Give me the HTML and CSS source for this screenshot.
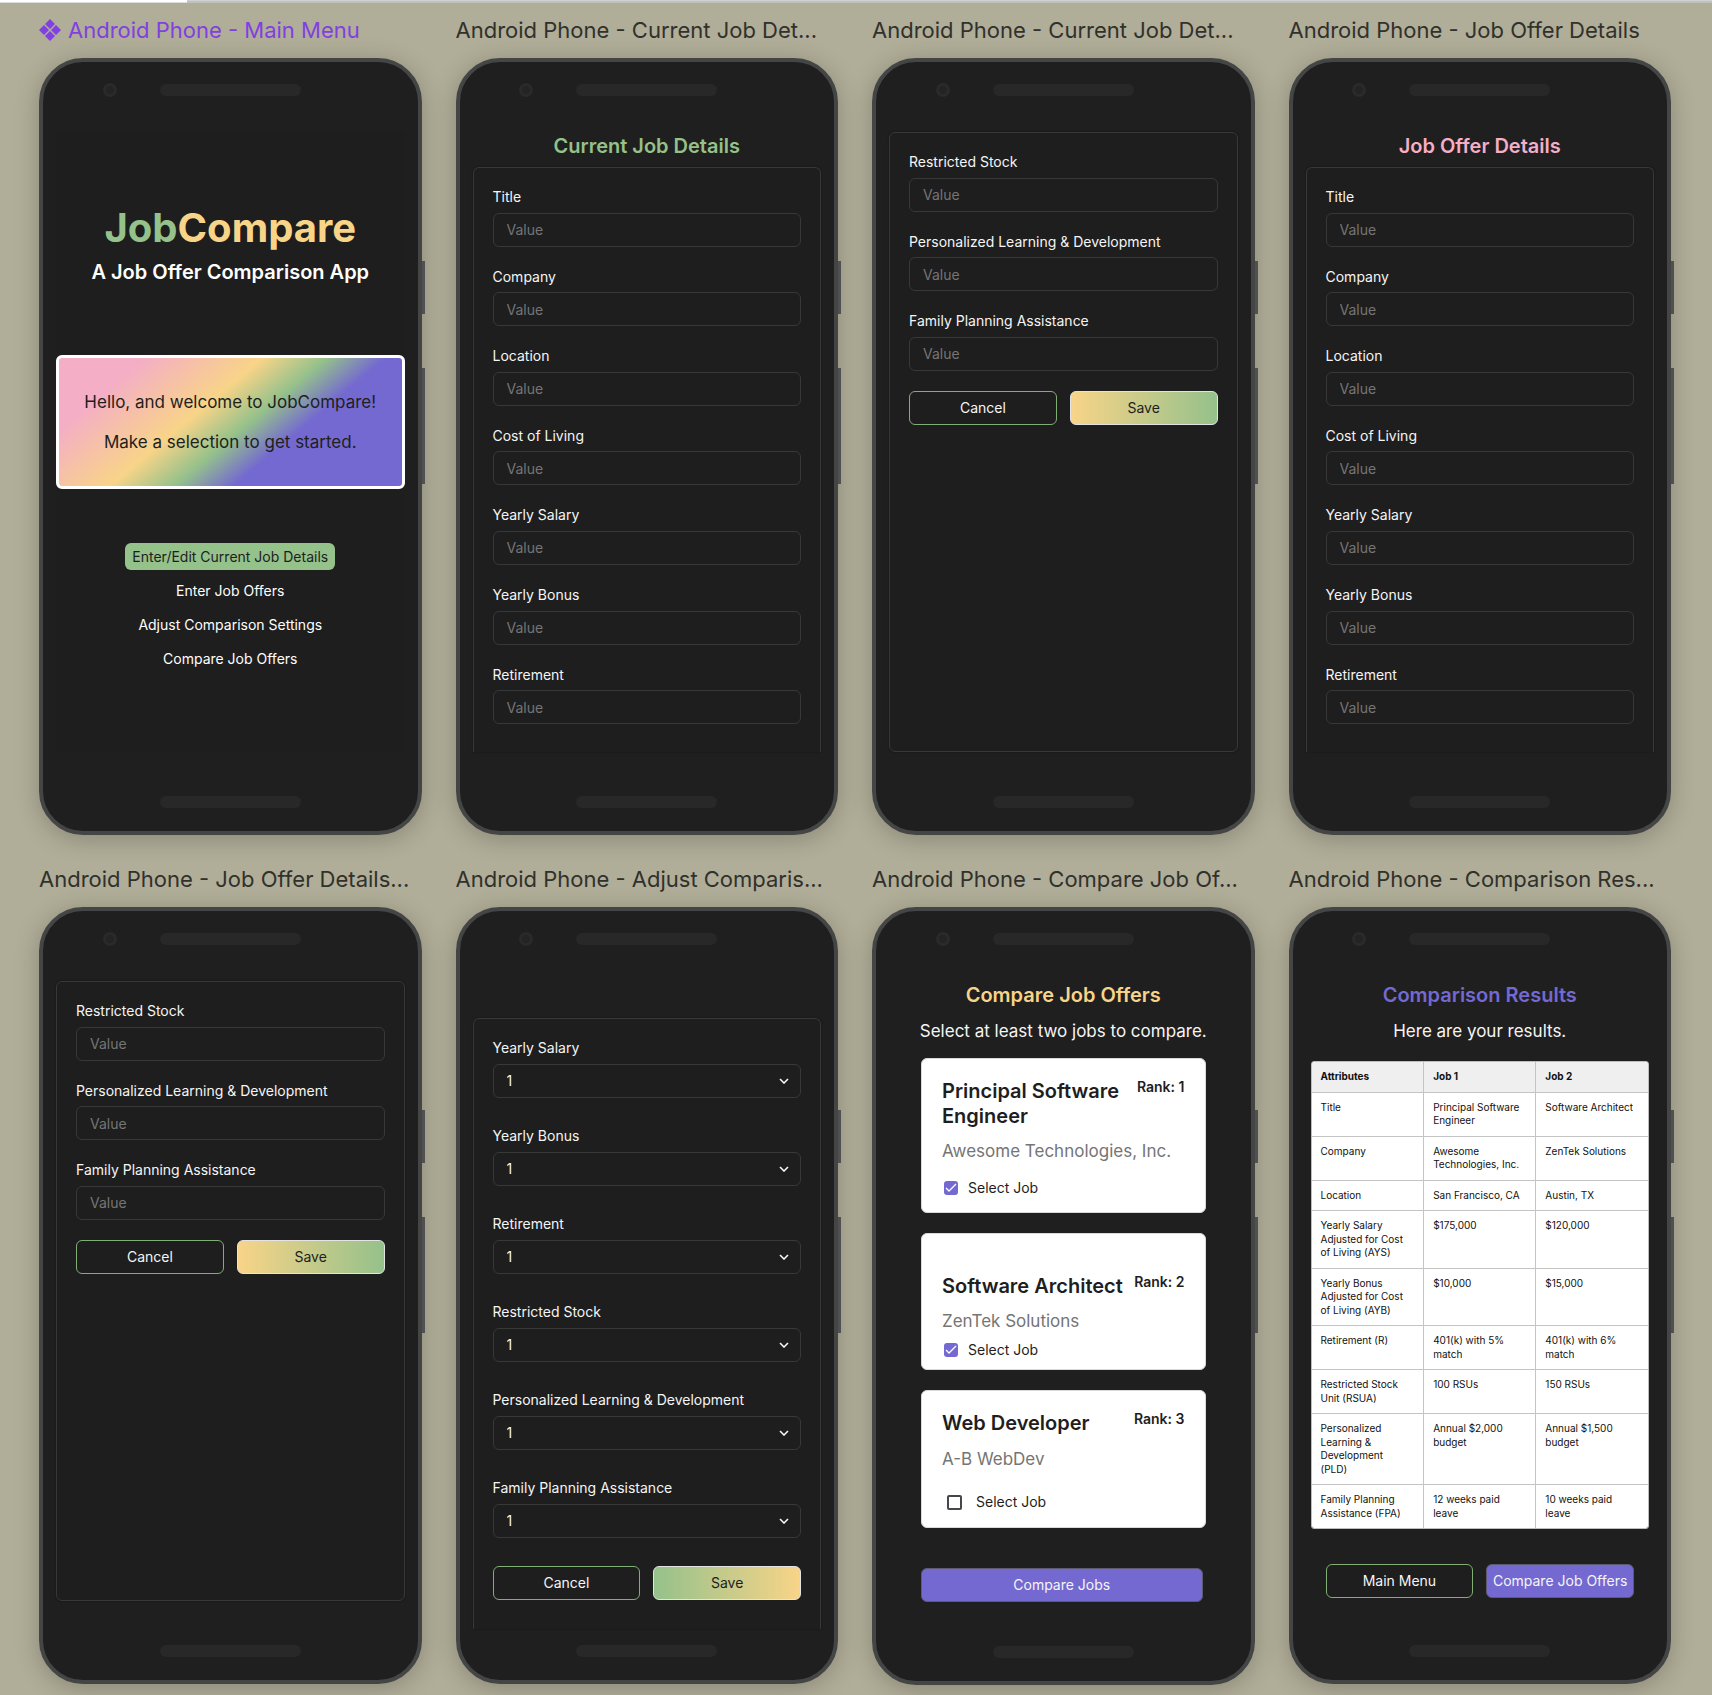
FILE: index.html
```html
<!DOCTYPE html>
<html lang="en">
<head>
<meta charset="utf-8">
<title>JobCompare – Wireframes</title>
<link rel="stylesheet" href="styles.css">
</head>
<body>
<div class="tabstrip"><span class="tabstrip-active"></span></div>
<main class="board">

  <figure class="frame">
    <figcaption class="frame-name frame-name--component">
      <svg class="component-icon" viewBox="0 0 22 22" aria-hidden="true"><path d="M11 0l5 5-5 5-5-5zM11 12l5 5-5 5-5-5zM5 6l5 5-5 5-5-5zM17 6l5 5-5 5-5-5z"/></svg>
      Android Phone - Main Menu
    </figcaption>
    <div class="phone">
      <div class="phone-top"><span class="camera"></span><span class="speaker"></span></div>
      <div class="screen screen--home">
        <h1 class="brand"><span class="green">Job</span><span class="yellow">Compare</span></h1>
        <p class="tagline">A Job Offer Comparison App</p>
        <div class="welcome">
          <p>Hello, and welcome to JobCompare!</p>
          <p>Make a selection to get started.</p>
        </div>
        <nav class="menu">
          <a class="menu-link menu-link--active" href="#current">Enter/Edit Current Job Details</a>
          <a class="menu-link" href="#offers">Enter Job Offers</a>
          <a class="menu-link" href="#settings">Adjust Comparison Settings</a>
          <a class="menu-link" href="#compare">Compare Job Offers</a>
        </nav>
      </div>
      <div class="phone-bottom"><span class="speaker"></span></div>
    </div>
  </figure>

  <figure class="frame">
    <figcaption class="frame-name">Android Phone - Current Job Det...</figcaption>
    <div class="phone">
      <div class="phone-top"><span class="camera"></span><span class="speaker"></span></div>
      <div class="screen">
        <h2 class="title green">Current Job Details</h2>
        <form class="form form--continued">
          <label class="field"><span>Title</span><input type="text" placeholder="Value"></label>
          <label class="field"><span>Company</span><input type="text" placeholder="Value"></label>
          <label class="field"><span>Location</span><input type="text" placeholder="Value"></label>
          <label class="field"><span>Cost of Living</span><input type="text" placeholder="Value"></label>
          <label class="field"><span>Yearly Salary</span><input type="text" placeholder="Value"></label>
          <label class="field"><span>Yearly Bonus</span><input type="text" placeholder="Value"></label>
          <label class="field"><span>Retirement</span><input type="text" placeholder="Value"></label>
        </form>
      </div>
      <div class="phone-bottom"><span class="speaker"></span></div>
    </div>
  </figure>

  <figure class="frame">
    <figcaption class="frame-name">Android Phone - Current Job Det...</figcaption>
    <div class="phone">
      <div class="phone-top"><span class="camera"></span><span class="speaker"></span></div>
      <div class="screen">
        <form class="form">
          <label class="field"><span>Restricted Stock</span><input type="text" placeholder="Value"></label>
          <label class="field"><span>Personalized Learning &amp; Development</span><input type="text" placeholder="Value"></label>
          <label class="field"><span>Family Planning Assistance</span><input type="text" placeholder="Value"></label>
          <div class="actions">
            <button class="button button--outline" type="button">Cancel</button>
            <button class="button button--save" type="button">Save</button>
          </div>
        </form>
      </div>
      <div class="phone-bottom"><span class="speaker"></span></div>
    </div>
  </figure>

  <figure class="frame">
    <figcaption class="frame-name">Android Phone - Job Offer Details</figcaption>
    <div class="phone">
      <div class="phone-top"><span class="camera"></span><span class="speaker"></span></div>
      <div class="screen">
        <h2 class="title pink">Job Offer Details</h2>
        <form class="form form--continued">
          <label class="field"><span>Title</span><input type="text" placeholder="Value"></label>
          <label class="field"><span>Company</span><input type="text" placeholder="Value"></label>
          <label class="field"><span>Location</span><input type="text" placeholder="Value"></label>
          <label class="field"><span>Cost of Living</span><input type="text" placeholder="Value"></label>
          <label class="field"><span>Yearly Salary</span><input type="text" placeholder="Value"></label>
          <label class="field"><span>Yearly Bonus</span><input type="text" placeholder="Value"></label>
          <label class="field"><span>Retirement</span><input type="text" placeholder="Value"></label>
        </form>
      </div>
      <div class="phone-bottom"><span class="speaker"></span></div>
    </div>
  </figure>

  <figure class="frame">
    <figcaption class="frame-name">Android Phone - Job Offer Details...</figcaption>
    <div class="phone">
      <div class="phone-top"><span class="camera"></span><span class="speaker"></span></div>
      <div class="screen">
        <form class="form">
          <label class="field"><span>Restricted Stock</span><input type="text" placeholder="Value"></label>
          <label class="field"><span>Personalized Learning &amp; Development</span><input type="text" placeholder="Value"></label>
          <label class="field"><span>Family Planning Assistance</span><input type="text" placeholder="Value"></label>
          <div class="actions">
            <button class="button button--outline" type="button">Cancel</button>
            <button class="button button--save" type="button">Save</button>
          </div>
        </form>
      </div>
      <div class="phone-bottom"><span class="speaker"></span></div>
    </div>
  </figure>

  <figure class="frame">
    <figcaption class="frame-name">Android Phone - Adjust Comparis...</figcaption>
    <div class="phone phone--settings">
      <div class="phone-top"><span class="camera"></span><span class="speaker"></span></div>
      <div class="screen">
        <form class="form form--continued form--settings">
          <label class="field"><span>Yearly Salary</span><span class="select"><select><option>1</option></select><svg viewBox="0 0 10 6" aria-hidden="true"><path d="M1 1l4 4 4-4"/></svg></span></label>
          <label class="field"><span>Yearly Bonus</span><span class="select"><select><option>1</option></select><svg viewBox="0 0 10 6" aria-hidden="true"><path d="M1 1l4 4 4-4"/></svg></span></label>
          <label class="field"><span>Retirement</span><span class="select"><select><option>1</option></select><svg viewBox="0 0 10 6" aria-hidden="true"><path d="M1 1l4 4 4-4"/></svg></span></label>
          <label class="field"><span>Restricted Stock</span><span class="select"><select><option>1</option></select><svg viewBox="0 0 10 6" aria-hidden="true"><path d="M1 1l4 4 4-4"/></svg></span></label>
          <label class="field"><span>Personalized Learning &amp; Development</span><span class="select"><select><option>1</option></select><svg viewBox="0 0 10 6" aria-hidden="true"><path d="M1 1l4 4 4-4"/></svg></span></label>
          <label class="field"><span>Family Planning Assistance</span><span class="select"><select><option>1</option></select><svg viewBox="0 0 10 6" aria-hidden="true"><path d="M1 1l4 4 4-4"/></svg></span></label>
          <div class="actions">
            <button class="button button--outline" type="button">Cancel</button>
            <button class="button button--save-reverse" type="button">Save</button>
          </div>
        </form>
      </div>
      <div class="phone-bottom"><span class="speaker"></span></div>
    </div>
  </figure>

  <figure class="frame">
    <figcaption class="frame-name">Android Phone - Compare Job Of...</figcaption>
    <div class="phone">
      <div class="phone-top"><span class="camera"></span><span class="speaker"></span></div>
      <div class="screen">
        <h2 class="title yellow">Compare Job Offers</h2>
        <p class="subtitle">Select at least two jobs to compare.</p>
        <div class="jobs">
          <article class="job">
            <div class="job-head"><h3>Principal Software Engineer</h3><span class="rank">Rank: 1</span></div>
            <p class="company">Awesome Technologies, Inc.</p>
            <label class="pick"><input type="checkbox" checked>Select Job</label>
          </article>
          <article class="job job--low">
            <div class="job-head"><h3>Software Architect</h3><span class="rank">Rank: 2</span></div>
            <p class="company">ZenTek Solutions</p>
            <label class="pick"><input type="checkbox" checked>Select Job</label>
          </article>
          <article class="job job--open">
            <div class="job-head"><h3>Web Developer</h3><span class="rank">Rank: 3</span></div>
            <p class="company">A-B WebDev</p>
            <label class="pick"><input type="checkbox">Select Job</label>
          </article>
          <button class="button button--purple button--wide" type="button">Compare Jobs</button>
        </div>
      </div>
      <div class="phone-bottom"><span class="speaker"></span></div>
    </div>
  </figure>

  <figure class="frame">
    <figcaption class="frame-name">Android Phone - Comparison Res...</figcaption>
    <div class="phone">
      <div class="phone-top"><span class="camera"></span><span class="speaker"></span></div>
      <div class="screen">
        <h2 class="title purple">Comparison Results</h2>
        <p class="subtitle">Here are your results.</p>
        <div class="results">
          <table>
            <thead>
              <tr><th>Attributes</th><th>Job 1</th><th>Job 2</th></tr>
            </thead>
            <tbody>
              <tr><td>Title</td><td>Principal Software Engineer</td><td>Software Architect</td></tr>
              <tr><td>Company</td><td>Awesome Technologies, Inc.</td><td>ZenTek Solutions</td></tr>
              <tr><td>Location</td><td>San Francisco, CA</td><td>Austin, TX</td></tr>
              <tr><td>Yearly Salary Adjusted for Cost of Living (AYS)</td><td>$175,000</td><td>$120,000</td></tr>
              <tr><td>Yearly Bonus Adjusted for Cost of Living (AYB)</td><td>$10,000</td><td>$15,000</td></tr>
              <tr><td>Retirement (R)</td><td>401(k) with 5% match</td><td>401(k) with 6% match</td></tr>
              <tr><td>Restricted Stock Unit (RSUA)</td><td>100 RSUs</td><td>150 RSUs</td></tr>
              <tr><td>Personalized Learning &amp; Development (PLD)</td><td>Annual $2,000 budget</td><td>Annual $1,500 budget</td></tr>
              <tr><td>Family Planning Assistance (FPA)</td><td>12 weeks paid leave</td><td>10 weeks paid leave</td></tr>
            </tbody>
          </table>
        </div>
        <div class="actions actions--results">
          <button class="button button--outline" type="button">Main Menu</button>
          <button class="button button--purple" type="button">Compare Job Offers</button>
        </div>
      </div>
      <div class="phone-bottom"><span class="speaker"></span></div>
    </div>
  </figure>

</main>
</body>
</html>
```
FILE: styles.css
```css
:root {
  --green: #95c18b;
  --yellow: #f8d488;
  --pink: #f4aec6;
  --purple: #7469d0;
  --ink: #1e1e1e;
  --line: #383838;
}

* {
  box-sizing: border-box;
  margin: 0;
}

body {
  background: #b0ad98;
  color: #f5f5f5;
  font: 14px/1.4 Inter, "Liberation Sans", sans-serif;
}

button, input, select {
  font: inherit;
  color: inherit;
}

.green { color: var(--green); }
.yellow { color: var(--yellow); }
.pink { color: var(--pink); }
.purple { color: var(--purple); }

/* Edge of the editor's tab strip */
.tabstrip {
  display: flex;
  height: 3px;
  background: #d0d2cf;
  border-bottom: 2px solid #c0c1bd;
}

.tabstrip-active {
  width: 187px;
  height: 3px;
  background: #fff;
  border-bottom: 1px solid #ddd;
}

.board {
  display: grid;
  grid-template-columns: repeat(4, minmax(0, 1fr));
  gap: 30px 34px;
  padding: 13px 41px 11px 39px;
}

.frame {
  display: grid;
  align-content: start;
  gap: 14px;
}

.frame-name {
  display: flex;
  align-items: center;
  gap: 7px;
  color: #31312c;
  font-size: 22px;
  line-height: 28px;
  white-space: nowrap;
}

.frame-name--component { color: #8140e0; }

.component-icon {
  width: 22px;
  height: 22px;
  fill: currentColor;
}

/* Phone body */
.phone {
  position: relative;
  display: flex;
  flex-direction: column;
  min-height: 777px;
  padding: 0 13px;
  background: #1f1f1f;
  border: 4px solid #444545;
  border-radius: 44px;
  box-shadow: 0 4px 24px rgba(0, 0, 0, .22);
}

/* Volume and power keys on the right edge */
.phone::before,
.phone::after {
  content: "";
  position: absolute;
  left: calc(100% + 4px);
  width: 3px;
  background: #505052;
}

.phone::before { top: 199px; height: 53px; }
.phone::after { top: 306px; height: 116px; }

.phone-top {
  display: grid;
  grid-template-columns: 1fr auto 1fr;
  align-items: center;
  height: 70px;
  padding-bottom: 14px;
}

.speaker {
  grid-column: 2;
  width: 141px;
  height: 12px;
  border-radius: 6px;
  background: #282828;
}

.camera {
  grid-column: 1;
  justify-self: end;
  width: 14px;
  height: 14px;
  margin-right: 43px;
  border: 3px solid #2a2a2a;
  border-radius: 50%;
  background: #242424;
}

.phone-bottom {
  display: flex;
  align-items: end;
  justify-content: center;
  height: 79px;
  padding-bottom: 23px;
}

.phone--settings .screen { padding-top: 37px; }
.phone--settings .phone-bottom { height: 51px; }

.screen {
  flex: 1;
  display: flex;
  flex-direction: column;
}

.title {
  padding-bottom: 6px;
  font-size: 20px;
  font-weight: 600;
  line-height: 29px;
  text-align: center;
}

.subtitle {
  font-size: 17px;
  line-height: 30px;
  text-align: center;
}

/* Main menu */
.screen--home {
  background: var(--ink);
  text-align: center;
}

.brand {
  padding-top: 72px;
  font-size: 40px;
  font-weight: 700;
  line-height: 48px;
}

.tagline {
  padding-top: 6px;
  color: #fff;
  font-size: 20px;
  font-weight: 600;
  line-height: 28px;
}

.welcome {
  display: grid;
  align-content: center;
  gap: 16px;
  height: 134px;
  margin-top: 69px;
  border: 3px solid #fff;
  border-radius: 6px;
  background: linear-gradient(140deg, var(--pink) 17%, var(--yellow) 41%, var(--green) 54%, var(--purple) 66%);
  color: var(--ink);
  font-size: 17px;
  line-height: 24px;
}

.menu {
  display: flex;
  flex-direction: column;
  align-items: center;
  gap: 7px;
  padding-top: 54px;
}

.menu-link {
  padding: 0 7px;
  border-radius: 6px;
  color: #fff;
  line-height: 27px;
  text-decoration: none;
}

.menu-link--active {
  background: var(--green);
  color: var(--ink);
}

/* Forms */
.form {
  flex: 1;
  display: flex;
  flex-direction: column;
  gap: 20px;
  padding: 19px;
  background: var(--ink);
  border: 1px solid var(--line);
  border-radius: 6px;
  box-shadow: 0 0 2px #141414;
}

.form--continued {
  border-bottom: 0;
  border-radius: 6px 6px 0 0;
}

.form--settings {
  gap: 28px;
  line-height: 20px;
}

.field {
  display: grid;
  gap: 6px;
}

.field input,
.field select {
  appearance: none;
  width: 100%;
  height: 34px;
  padding: 0 13px;
  background: var(--ink);
  border: 1px solid var(--line);
  border-radius: 6px;
}

.field input::placeholder { color: #757575; }

.select {
  display: grid;
  align-items: center;
}

.select select,
.select svg {
  grid-area: 1 / 1;
}

.select svg {
  justify-self: end;
  width: 10px;
  height: 6px;
  margin-right: 12px;
  fill: none;
  stroke: #f5f5f5;
  stroke-width: 1.6;
  pointer-events: none;
}

.actions {
  display: grid;
  grid-template-columns: 1fr 1fr;
  gap: 13px;
}

.button {
  height: 34px;
  padding: 0;
  border: 1px solid transparent;
  border-radius: 6px;
  white-space: nowrap;
}

.button--outline {
  background: var(--ink);
  border-color: #7fae76;
}

.button--save,
.button--save-reverse {
  border-color: #e3e3e3;
  color: var(--ink);
}

.button--save { background: linear-gradient(90deg, var(--yellow), var(--green)); }
.button--save-reverse { background: linear-gradient(90deg, var(--green), var(--yellow)); }

.button--purple {
  background: var(--purple);
  border-color: #5d5a72;
}

/* Job cards */
.jobs {
  display: flex;
  flex-direction: column;
  gap: 20px;
  padding: 12px 32px 0;
}

.job {
  padding: 20px 20px 15px;
  background: #fff;
  border: 1px solid #d9d9d9;
  border-radius: 6px;
  color: var(--ink);
}

.job-head {
  display: flex;
  justify-content: space-between;
  gap: 6px;
}

.job h3 {
  font-size: 20px;
  font-weight: 600;
  line-height: 25px;
}

.rank {
  font-weight: 600;
  line-height: 15px;
  white-space: nowrap;
}

.company {
  padding: 10px 0 16px;
  color: #757575;
  font-size: 17px;
  line-height: 24px;
}

.pick {
  display: flex;
  align-items: center;
  gap: 10px;
  padding-left: 2px;
  line-height: 18px;
}

.pick input {
  appearance: none;
  width: 14px;
  height: 14px;
  margin: 0;
  border-radius: 3px;
  background: var(--purple) url("data:image/svg+xml,%3Csvg xmlns='http://www.w3.org/2000/svg' viewBox='0 0 14 14'%3E%3Cpath d='M2 7l3 3 7-7' fill='none' stroke='%23fff' stroke-width='1.3'/%3E%3C/svg%3E");
}

.job--low { padding: 40px 20px 10px; }
.job--low .company { padding-bottom: 8px; }
.job--open { padding-bottom: 16px; }
.job--open .company { padding: 11px 0 22px; }

.job--open .pick {
  gap: 14px;
  padding-left: 5px;
}

.job--open .pick input {
  width: 15px;
  height: 15px;
  border: 2px solid #49454f;
  border-radius: 2px;
  background: none;
}

.button--wide {
  margin: 20px 3px 0 0;
}

/* Results */
.results {
  margin: 15px 5px 0;
  overflow: hidden;
  border: 1px solid #bdbdbd;
  border-radius: 3px;
}

.results table {
  width: 100%;
  border-collapse: collapse;
  table-layout: fixed;
  background: #fff;
  color: #111;
  font-size: 10px;
  line-height: 1.35;
}

.results th,
.results td {
  padding: 8px 12px 8px 9px;
  border: 1px solid #c4c4c4;
  text-align: left;
  vertical-align: top;
}

.results th {
  background: #efefef;
  font-weight: 700;
}

.results tr > :first-child { border-left: 0; }
.results tr > :last-child { border-right: 0; }
.results thead th { border-top: 0; }
.results tbody tr:last-child td { border-bottom: 0; }

.actions--results {
  padding: 35px 20px 0;
}
```
